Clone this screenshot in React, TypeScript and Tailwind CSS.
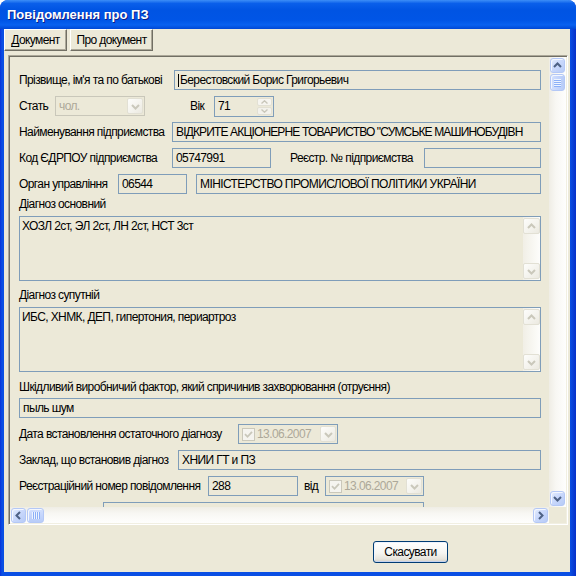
import React from "react";

type Dir = "up" | "down" | "left" | "right";

const PATHS: Record<Dir, string> = {
  up: "M1 6 L4.5 2.5 L8 6",
  down: "M1 3 L4.5 6.5 L8 3",
  left: "M6 1 L2.5 4.5 L6 8",
  right: "M3 1 L6.5 4.5 L3 8",
};

function Arrow({ dir, color }: { dir: Dir; color: string }) {
  return (
    <svg width="9" height="9" viewBox="0 0 9 9">
      <path d={PATHS[dir]} fill="none" stroke={color} strokeWidth="2" />
    </svg>
  );
}

function SmallArrow({ dir }: { dir: "up" | "down" }) {
  return (
    <svg width="7" height="4" viewBox="0 0 7 4">
      <path
        d={dir === "up" ? "M0.5 3.5 L3.5 0.8 L6.5 3.5" : "M0.5 0.5 L3.5 3.2 L6.5 0.5"}
        fill="none"
        stroke="#c9c7ba"
        strokeWidth="1.4"
      />
    </svg>
  );
}

function XpButton({ dir, className = "" }: { dir: Dir; className?: string }) {
  return (
    <div
      className={
        "flex items-center justify-center rounded-[3px] border border-[#b4c8f6] bg-[linear-gradient(135deg,#e6eefd_0%,#cad9fc_45%,#b7cbf7_100%)] shadow-[inset_1px_1px_0_#f4f7fe] " +
        className
      }
    >
      <Arrow dir={dir} color="#4d6185" />
    </div>
  );
}

function DisButton({ dir, className = "" }: { dir: Dir; className?: string }) {
  return (
    <div
      className={
        "flex items-center justify-center rounded-[2px] border border-[#e2e0d4] bg-[linear-gradient(135deg,#fdfdfb_0%,#f3f2ec_60%,#ebe9e0_100%)] " +
        className
      }
    >
      <Arrow dir={dir} color="#cac8bb" />
    </div>
  );
}

function Grip({ vertical }: { vertical: boolean }) {
  const rects = [0, 2, 4, 6];
  return vertical ? (
    <svg width="7" height="8" viewBox="0 0 7 8">
      {rects.map((y) => (
        <g key={y}>
          <rect x="0" y={y} width="7" height="1" fill="#eef4fe" />
          <rect x="0" y={y + 1} width="7" height="1" fill="#8cb0f8" />
        </g>
      ))}
    </svg>
  ) : (
    <svg width="8" height="7" viewBox="0 0 8 7">
      {rects.map((x) => (
        <g key={x}>
          <rect x={x} y="0" width="1" height="7" fill="#eef4fe" />
          <rect x={x + 1} y="0" width="1" height="7" fill="#8cb0f8" />
        </g>
      ))}
    </svg>
  );
}

function Box({ className = "", children }: { className?: string; children?: React.ReactNode }) {
  return (
    <div
      className={
        "flex h-[20px] shrink-0 items-center overflow-hidden whitespace-nowrap border border-[#7f9db9] pl-[3px] " +
        className
      }
    >
      {children}
    </div>
  );
}

function Memo({ text }: { text: string }) {
  return (
    <div className="flex h-[65px] w-[522px] border border-[#7f9db9]">
      <div className="flex-1 pl-[2px] pt-[2px] leading-[14px]">{text}</div>
      <div className="flex w-[17px] flex-col justify-between bg-[linear-gradient(90deg,#f1efe6,#fdfdfb)] py-[1px]">
        <DisButton dir="up" className="h-[16px] w-[17px]" />
        <DisButton dir="down" className="h-[16px] w-[17px]" />
      </div>
    </div>
  );
}

function DatePick({ className = "" }: { className?: string }) {
  return (
    <div className={"flex h-[20px] shrink-0 items-center border border-[#7f9db9] " + className}>
      <div className="ml-[3px] flex h-[13px] w-[13px] items-center justify-center border border-[#cac8bb] bg-[#f5f4ef]">
        <svg width="9" height="9" viewBox="0 0 9 9">
          <path d="M1 4.2 L3.5 6.8 L8 1.8" fill="none" stroke="#c9c7ba" strokeWidth="1.8" />
        </svg>
      </div>
      <span className="ml-[2px] text-[12px] tracking-[-0.6px] text-[#aca899]">13.06.2007</span>
      <DisButton dir="down" className="ml-auto mr-[1px] h-[16px] w-[16px]" />
    </div>
  );
}

export default function App() {
  return (
    <div
      className="h-[576px] w-[576px] overflow-hidden bg-white text-[12px] tracking-[-0.6px] text-black"
      style={{ fontFamily: '"Liberation Sans", Arial, sans-serif' }}
    >
      <div className="flex h-[576px] w-[576px] flex-col overflow-hidden rounded-t-[8px] bg-[linear-gradient(90deg,#0831d9_0px,#0a4fe4_2px,#0a4fe4_570px,#0731c9_576px)]">
        {/* title bar */}
        <div className="flex h-[29px] shrink-0 items-center bg-[linear-gradient(180deg,#3d8ef7_0%,#0a5fea_12%,#0054e3_35%,#0055e6_70%,#0861f0_86%,#0047d5_100%)] pl-[7px] text-[13px] font-bold tracking-normal text-white [text-shadow:1px_1px_0_#0f1c84]">
          Повідомлення про ПЗ
        </div>

        {/* client */}
        <div className="mb-[4px] ml-[4px] mr-[6px] flex flex-1 flex-col bg-[#ece9d8]">
          {/* toolbar */}
          <div className="flex h-[22px] shrink-0 gap-[3px]">
            <div className="flex w-[63px] items-center justify-center border border-b-[#716f64] border-l-white border-r-[#716f64] border-t-white shadow-[inset_-1px_-1px_0_#aca899]">
              <span>
                <span className="underline underline-offset-2">Д</span>окумент
              </span>
            </div>
            <div className="flex w-[83px] items-center justify-center border border-b-[#716f64] border-l-white border-r-[#716f64] border-t-white shadow-[inset_-1px_-1px_0_#aca899]">
              Про документ
            </div>
          </div>

          {/* frame */}
          <div className="ml-[4px] mt-[4px] h-[470px] w-[560px] border border-b-white border-l-[#aca899] border-r-white border-t-[#aca899] p-[1px] shadow-[inset_1px_1px_0_#716f64,inset_-1px_-1px_0_#f1efe2]">
            <div className="flex h-[450px]">
              {/* scrolling content */}
              <div className="flex w-[539px] flex-col overflow-hidden pl-[9px] pt-[13px]">
                <div className="flex h-[20px] shrink-0 items-center">
                  <span className="w-[155px] shrink-0">Прізвище, ім'я та по батькові</span>
                  <Box className="w-[367px]">
                    <span className="mr-[1px] h-[13px] w-[1px] bg-black" />
                    Берестовский Борис Григорьевич
                  </Box>
                </div>

                <div className="mt-[6px] flex h-[20px] shrink-0 items-center">
                  <span className="w-[36px] shrink-0">Стать</span>
                  <div className="flex h-[20px] w-[90px] shrink-0 items-center border border-[#c9c7ba]">
                    <span className="pl-[3px] text-[#aca899]">чол.</span>
                    <DisButton dir="down" className="ml-auto mr-[1px] h-[16px] w-[16px]" />
                  </div>
                  <span className="ml-[45px] w-[24px] shrink-0">Вік</span>
                  <div className="flex h-[21px] w-[60px] shrink-0 items-center border border-[#7f9db9]">
                    <span className="pl-[3px]">71</span>
                    <div className="ml-auto mr-[1px] flex h-[17px] w-[15px] flex-col">
                      <div className="flex h-[8px] items-center justify-center rounded-[2px] border border-[#e2e0d4] bg-[#f6f5f0]">
                        <SmallArrow dir="up" />
                      </div>
                      <div className="mt-[1px] flex h-[8px] items-center justify-center rounded-[2px] border border-[#e2e0d4] bg-[#f3f2ec]">
                        <SmallArrow dir="down" />
                      </div>
                    </div>
                  </div>
                </div>

                <div className="mt-[6px] flex h-[20px] shrink-0 items-center">
                  <span className="w-[153px] shrink-0">Найменування підприємства</span>
                  <Box className="w-[369px] tracking-[-0.85px]">ВІДКРИТЕ АКЦІОНЕРНЕ ТОВАРИСТВО "СУМСЬКЕ МАШИНОБУДІВН</Box>
                </div>

                <div className="mt-[6px] flex h-[20px] shrink-0 items-center">
                  <span className="w-[153px] shrink-0">Код ЄДРПОУ підприємства</span>
                  <Box className="w-[99px]">05747991</Box>
                  <span className="ml-[19px] w-[134px] shrink-0">Реєстр. № підприємства</span>
                  <Box className="w-[117px]" />
                </div>

                <div className="mt-[6px] flex h-[20px] shrink-0 items-center">
                  <span className="w-[99px] shrink-0">Орган управління</span>
                  <Box className="w-[69px]">06544</Box>
                  <Box className="ml-[9px] w-[345px]">МІНІСТЕРСТВО ПРОМИСЛОВОЇ ПОЛІТИКИ УКРАЇНИ</Box>
                </div>

                <div className="mt-[3px] h-[14px] shrink-0 leading-[14px]">Діагноз основний</div>
                <div className="mt-[5px] shrink-0">
                  <Memo text="ХОЗЛ 2ст, ЭЛ 2ст, ЛН 2ст, НСТ 3ст" />
                </div>

                <div className="mt-[7px] h-[14px] shrink-0 leading-[14px]">Діагноз супутній</div>
                <div className="mt-[5px] shrink-0">
                  <Memo text="ИБС, ХНМК, ДЕП, гипертония, периартроз" />
                </div>

                <div className="mt-[8px] h-[14px] shrink-0 whitespace-nowrap leading-[14px]">
                  Шкідливий виробничий фактор, який спричинив захворювання (отруєння)
                </div>
                <Box className="mt-[4px] w-[522px]">пыль шум</Box>

                <div className="mt-[6px] flex h-[20px] shrink-0 items-center">
                  <span className="w-[219px] shrink-0">Дата встановлення остаточного діагнозу</span>
                  <DatePick className="w-[100px]" />
                </div>

                <div className="mt-[6px] flex h-[20px] shrink-0 items-center">
                  <span className="w-[159px] shrink-0">Заклад, що встановив діагноз</span>
                  <Box className="w-[363px]">ХНИИ ГТ и ПЗ</Box>
                </div>

                <div className="mt-[6px] flex h-[20px] shrink-0 items-center">
                  <span className="w-[189px] shrink-0">Реєстраційний номер повідомлення</span>
                  <Box className="w-[90px]">288</Box>
                  <span className="ml-[6px] w-[21px] shrink-0">від</span>
                  <DatePick className="w-[99px]" />
                </div>

                <div className="mt-[6px] flex h-[20px] shrink-0 items-center">
                  <Box className="ml-[84px] w-[321px]" />
                </div>
              </div>

              {/* vertical scrollbar */}
              <div className="flex w-[17px] flex-col bg-[linear-gradient(90deg,#efede5_0%,#f8f7f3_40%,#fefefd_100%)] px-[1px] py-[1px]">
                <XpButton dir="up" className="h-[15px] w-[15px]" />
                <div className="mt-[1px] flex h-[17px] w-[15px] items-center justify-center rounded-[3px] border border-[#b4c8f6] bg-[linear-gradient(90deg,#d3e0fd_0%,#c4d5fc_50%,#b8ccf8_100%)] shadow-[inset_1px_1px_0_#f4f7fe]">
                  <Grip vertical />
                </div>
                <div className="flex-1" />
                <XpButton dir="down" className="h-[15px] w-[15px]" />
              </div>
            </div>

            {/* horizontal scrollbar */}
            <div className="flex h-[16px]">
              <div className="flex w-[539px] items-center bg-[linear-gradient(180deg,#efede5_0%,#f8f7f3_40%,#fefefd_100%)] px-[1px]">
                <XpButton dir="left" className="h-[15px] w-[15px]" />
                <div className="ml-[1px] flex h-[15px] w-[17px] items-center justify-center rounded-[3px] border border-[#b4c8f6] bg-[linear-gradient(180deg,#d3e0fd_0%,#c4d5fc_50%,#b8ccf8_100%)] shadow-[inset_1px_1px_0_#f4f7fe]">
                  <Grip vertical={false} />
                </div>
                <div className="flex-1" />
                <XpButton dir="right" className="h-[15px] w-[15px]" />
              </div>
              <div className="w-[17px] bg-[#ece9d8]" />
            </div>
          </div>

          {/* bottom button */}
          <div className="ml-[369px] mt-[16px]">
            <div className="flex h-[22px] w-[75px] items-center justify-center rounded-[3px] border border-[#003c74] bg-[linear-gradient(180deg,#ffffff_0%,#f5f5f1_55%,#e6e4dc_85%,#d6d0c5_100%)] shadow-[inset_0_-1px_0_#c5d3ee,inset_1px_1px_0_#eef3fc]">
              Скасувати
            </div>
          </div>
        </div>
      </div>
    </div>
  );
}
